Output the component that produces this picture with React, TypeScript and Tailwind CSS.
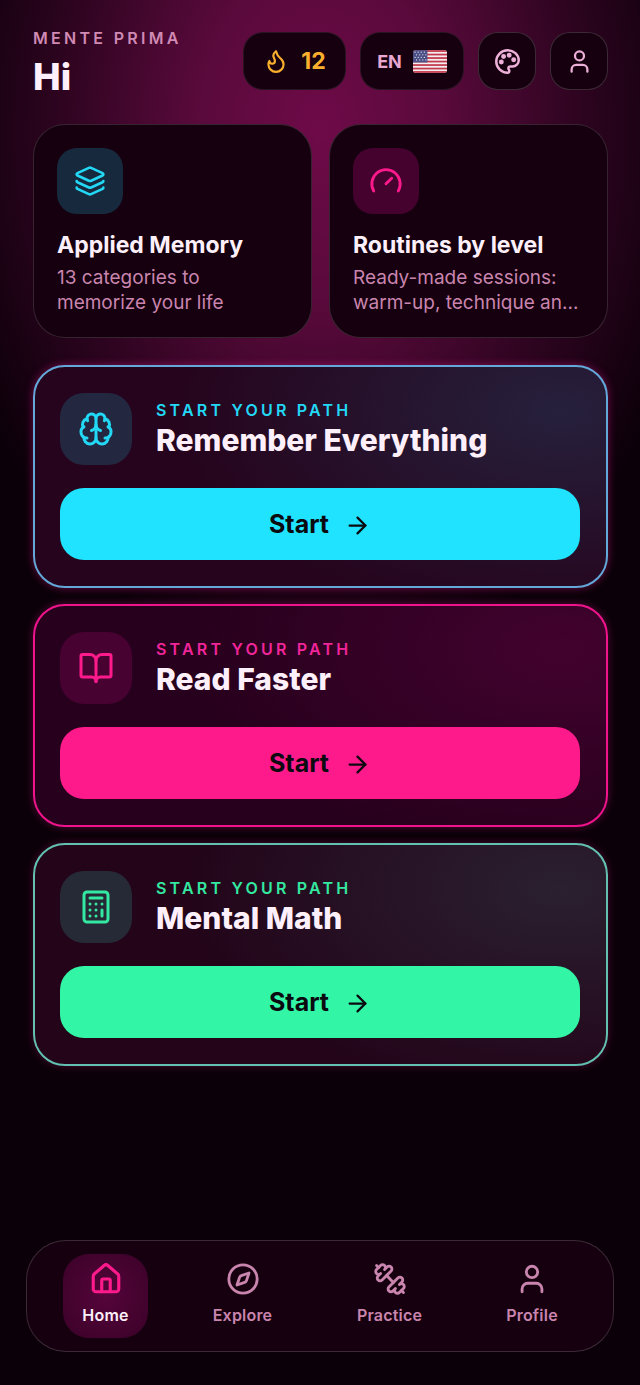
import React from 'react'
import { ArrowRight, BookOpen, Brain, Calculator, Compass, Dumbbell, Flame, Gauge, House, Layers, User } from 'lucide-react'

const UsFlag = () => (
  <svg width="34" height="23" viewBox="0 0 33 22" className="rounded-[3px]">
    <rect width="33" height="22" fill="#f4eef0" />
    <rect width="33" height="1.7" y="0" fill="#c23a4c" />
    <rect width="33" height="1.7" y="3.4" fill="#c23a4c" />
    <rect width="33" height="1.7" y="6.8" fill="#c23a4c" />
    <rect width="33" height="1.7" y="10.2" fill="#c23a4c" />
    <rect width="33" height="1.7" y="13.6" fill="#c23a4c" />
    <rect width="33" height="1.7" y="17" fill="#c23a4c" />
    <rect width="33" height="1.7" y="20.3" fill="#c23a4c" />
    <rect width="14" height="11.9" fill="#4a4f86" />
    <g fill="#e8e4f0">
      <circle cx="2" cy="2" r=".6" /><circle cx="5" cy="2" r=".6" /><circle cx="8" cy="2" r=".6" /><circle cx="11" cy="2" r=".6" />
      <circle cx="3.5" cy="4.5" r=".6" /><circle cx="6.5" cy="4.5" r=".6" /><circle cx="9.5" cy="4.5" r=".6" /><circle cx="12.5" cy="4.5" r=".6" />
      <circle cx="2" cy="7" r=".6" /><circle cx="5" cy="7" r=".6" /><circle cx="8" cy="7" r=".6" /><circle cx="11" cy="7" r=".6" />
      <circle cx="3.5" cy="9.5" r=".6" /><circle cx="6.5" cy="9.5" r=".6" /><circle cx="9.5" cy="9.5" r=".6" /><circle cx="12.5" cy="9.5" r=".6" />
    </g>
  </svg>
)

// lucide's palette has tiny dots, the reference has big ones
const PaletteIcon = () => (
  <svg width="27" height="27" viewBox="0 0 24 24" fill="none" stroke="#edb0d8" strokeWidth="2.2" strokeLinecap="round" strokeLinejoin="round">
    <path d="M12 2C6.5 2 2 6.5 2 12s4.5 10 10 10c.926 0 1.648-.746 1.648-1.688 0-.437-.18-.835-.437-1.125-.29-.289-.438-.652-.438-1.125a1.64 1.64 0 0 1 1.668-1.668h1.996c3.051 0 5.555-2.503 5.555-5.554C21.965 6.012 17.461 2 12 2z" />
    <circle cx="13.5" cy="6.5" r="1.1" fill="#edb0d8" />
    <circle cx="17.5" cy="10.5" r="1.1" fill="#edb0d8" />
    <circle cx="8.5" cy="7.5" r="1.1" fill="#edb0d8" />
    <circle cx="6.5" cy="12.5" r="1.1" fill="#edb0d8" />
  </svg>
)

const Header = () => (
  <div className="flex items-start justify-between">
    <div className="pt-[31px]">
      <p className="text-[16px] leading-[14px] font-semibold tracking-[3.3px] text-[#d08ab4]">MENTE PRIMA</p>
      <h1 className="mt-[12px] text-[37px] leading-[40px] font-extrabold text-[#fdf0fa]">Hi</h1>
    </div>
    <div className="flex items-center gap-[14px] pt-[32px]">
      <div className="flex h-[58px] w-[103px] items-center justify-center gap-[12px] rounded-[20px] border border-[#ffffff14] bg-[#16000f]">
        <Flame size={26} strokeWidth={2} className="text-[#fbb02d]" />
        <span className="text-[23px] font-bold text-[#fbb02d]">12</span>
      </div>
      <div className="flex h-[58px] w-[104px] items-center justify-center gap-[11px] rounded-[20px] border border-[#ffffff14] bg-[#16000f]">
        <span className="text-[18px] font-bold text-[#e9a8d2]">EN</span>
        <UsFlag />
      </div>
      <div className="flex h-[58px] w-[58px] items-center justify-center rounded-[20px] border border-[#ffffff29] bg-[#16000f]">
        <PaletteIcon />
      </div>
      <div className="flex h-[58px] w-[58px] items-center justify-center rounded-[20px] border border-[#ffffff29] bg-[#16000f]">
        <User size={27} strokeWidth={2} className="text-[#edb0d8]" />
      </div>
    </div>
  </div>
)

const FeatureCard = ({ icon, iconBox, title, lines }: { icon: React.ReactNode; iconBox: string; title: string; lines: string[] }) => (
  <div className="h-[214px] rounded-[32px] border border-[#ffffff24] bg-[#16000f] px-[23px] pt-[23px]">
    <div className={`flex h-[66px] w-[66px] items-center justify-center rounded-[20px] ${iconBox}`}>{icon}</div>
    <h2 className="mt-[16px] mb-[5px] text-[23px] leading-[30px] font-bold whitespace-nowrap text-[#fdf0fa]">{title}</h2>
    {lines.map((line) => (
      <p key={line} className="text-[19px] leading-[25px] whitespace-nowrap text-[#c985ae]">{line}</p>
    ))}
  </div>
)

const PathCard = ({ icon, iconBox, color, cardClass, btnClass, title }: { icon: React.ReactNode; iconBox: string; color: string; cardClass: string; btnClass: string; title: string }) => (
  <div className={`h-[223px] rounded-[32px] border-2 pt-[26px] pr-[26px] pl-[25px] ${cardClass}`}>
    <div className="flex items-center gap-6">
      <div className={`flex h-[72px] w-[72px] items-center justify-center rounded-[24px] ${iconBox}`}>{icon}</div>
      <div>
        <p className={`text-[16px] leading-[18px] font-semibold tracking-[3.2px] ${color}`}>START YOUR PATH</p>
        <h3 className="mt-[3px] text-[30px] leading-[36px] font-extrabold text-[#fdf0fa]">{title}</h3>
      </div>
    </div>
    <button className={`mt-[23px] flex h-[72px] w-full items-center justify-center gap-[15px] rounded-[24px] pt-[2px] text-[#0a0a10] ${btnClass}`}>
      <span className="text-[25px] font-bold">Start</span>
      <ArrowRight size={27} strokeWidth={2} />
    </button>
  </div>
)

const NavItem = ({ icon, label, width, active }: { icon: React.ReactNode; label: string; width: string; active?: boolean }) => (
  <div className={`flex h-[84px] flex-col items-center gap-[9px] rounded-[26px] pt-[8px] ${width} ${active ? 'bg-[#3f022b] bg-[radial-gradient(circle_at_center,#55043a,#3a0228)] text-[#ff1a8c]' : 'text-[#c985ae]'}`}>
    {icon}
    <span className={`text-[16px] leading-[20px] font-semibold tracking-[0.2px] whitespace-nowrap ${active ? 'text-[#fdf0fa]' : ''}`}>{label}</span>
  </div>
)

export default function App() {
  return (
    <div className="flex min-h-[1385px] flex-col bg-[#0b0009] bg-[radial-gradient(ellipse_400px_560px_at_320px_130px,#6e0a48_0%,#5a0a3c_30%,#2e0420_65%,#0b0009_97%)] font-['Inter',sans-serif]">
      <div className="flex flex-1 flex-col pr-[32px] pl-[33px]">
        <Header />
        <div className="mt-[27px] grid grid-cols-2 gap-[17px]">
          <FeatureCard
            icon={<Layers size={32} strokeWidth={2} className="text-[#22d8f5]" />}
            iconBox="bg-[#17293d]"
            title="Applied Memory"
            lines={['13 categories to', 'memorize your life']}
          />
          <FeatureCard
            icon={<Gauge size={34} strokeWidth={2} className="text-[#ff1a8c]" />}
            iconBox="bg-[#45022f]"
            title="Routines by level"
            lines={['Ready-made sessions:', 'warm-up, technique an...']}
          />
        </div>
        <div className="mt-[27px] flex flex-col gap-[16px]">
          <PathCard
            icon={<Brain size={36} strokeWidth={2} className="text-[#22d8f5]" />}
            iconBox="bg-[#232840]"
            color="text-[#22d8f5]"
            cardClass="border-[#62a8d8] bg-[#26041d] bg-[radial-gradient(ellipse_380px_210px_at_92%_20%,#26203c,#26041d)] shadow-[0_0_8px_#c0187a88]"
            btnClass="bg-[#1fe3ff]"
            title="Remember Everything"
          />
          <PathCard
            icon={<BookOpen size={36} strokeWidth={2} className="text-[#ff1a8c]" />}
            iconBox="bg-[#470232]"
            color="text-[#f0259a]"
            cardClass="border-[#f0148c] bg-[#26001c] bg-[radial-gradient(ellipse_380px_210px_at_92%_20%,#42022e,#26001c)] shadow-[0_0_8px_#c0187a66]"
            btnClass="bg-[#ff1a8c]"
            title="Read Faster"
          />
          <PathCard
            icon={<Calculator size={36} strokeWidth={2} className="text-[#33e8a0]" />}
            iconBox="bg-[#262a36]"
            color="text-[#33e8a0]"
            cardClass="border-[#62c0b0] bg-[#230419] bg-[radial-gradient(ellipse_380px_210px_at_92%_20%,#2a2030,#230419)] shadow-[0_0_8px_#c0187a55]"
            btnClass="bg-[#33f5a6]"
            title="Mental Math"
          />
        </div>
      </div>
      <div className="mx-[26px] mb-[33px] flex h-[112px] items-center rounded-[40px] border border-[#ffffff29] bg-[#16000f] pl-[36px]">
        <NavItem active width="w-[85px]" label="Home" icon={<House size={34} strokeWidth={2.2} />} />
        <NavItem width="ml-[64px] w-[61px]" label="Explore" icon={<Compass size={34} strokeWidth={2} />} />
        <NavItem width="ml-[84px] w-[65px]" label="Practice" icon={<Dumbbell size={34} strokeWidth={2} className="-scale-x-100" />} />
        <NavItem width="ml-[84px] w-[52px]" label="Profile" icon={<User size={34} strokeWidth={2} />} />
      </div>
    </div>
  )
}
